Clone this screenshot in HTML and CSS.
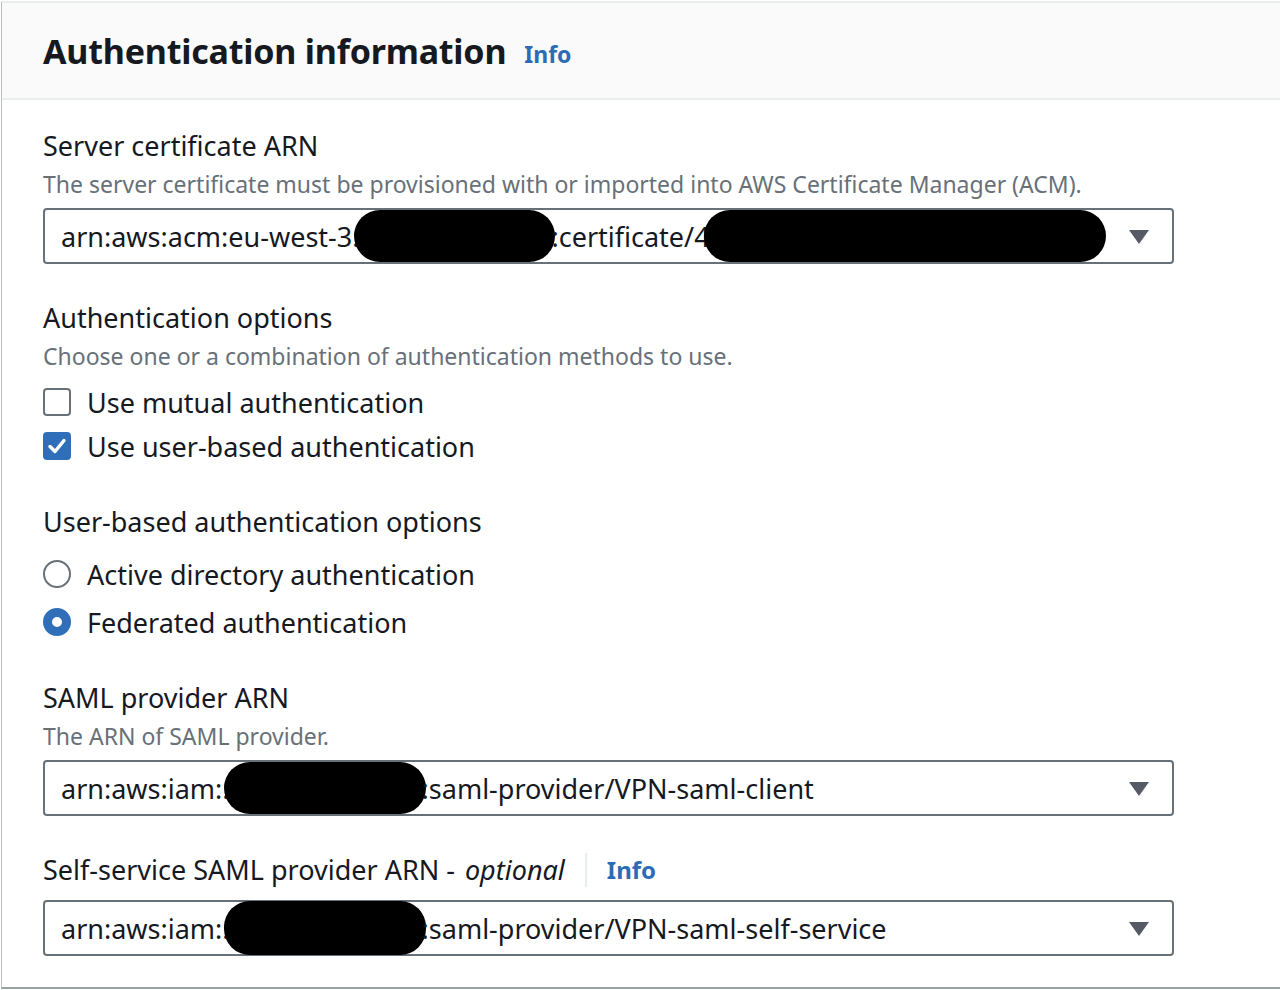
FILE: index.html
```html
<!DOCTYPE html>
<html lang="en">
<head>
<meta charset="utf-8">
<title>Authentication information</title>
<link rel="stylesheet" href="styles.css">
</head>
<body>
<div class="panel">
  <div class="panel-header">
    <h2 class="panel-title">Authentication information</h2>
    <a class="info-link header-info" href="#">Info</a>
  </div>
  <div class="panel-body">
    <div class="field">
      <div class="label">Server certificate ARN</div>
      <div class="desc">The server certificate must be provisioned with or imported into AWS Certificate Manager (ACM).</div>
      <div class="select">
        <span class="select-value">arn:aws:acm:eu-west-3:<span class="redact r1"></span>:certificate/4<span class="redact r2"></span></span>
        <svg class="caret" viewBox="0 0 20 14" width="20" height="14"><path d="M0 0 L20 0 L10 14 Z" fill="#545b64"/></svg>
      </div>
    </div>

    <div class="field gap-top">
      <div class="label">Authentication options</div>
      <div class="desc">Choose one or a combination of authentication methods to use.</div>
      <div class="choices checks">
        <label class="choice"><span class="checkbox"></span><span>Use mutual authentication</span></label>
        <label class="choice"><span class="checkbox checked"><svg viewBox="0 0 28 28" width="28" height="28"><path d="M7 14.5 L12 19.5 L21 8.5" fill="none" stroke="#fff" stroke-width="3.4" stroke-linecap="round" stroke-linejoin="round"/></svg></span><span>Use user-based authentication</span></label>
      </div>
    </div>

    <div class="field gap-top">
      <div class="label">User-based authentication options</div>
      <div class="choices radios">
        <label class="choice radio-row"><span class="radio"></span><span>Active directory authentication</span></label>
        <label class="choice radio-row"><span class="radio checked"></span><span>Federated authentication</span></label>
      </div>
    </div>

    <div class="field gap-top-s">
      <div class="label">SAML provider ARN</div>
      <div class="desc">The ARN of SAML provider.</div>
      <div class="select">
        <span class="select-value">arn:aws:iam::<span class="redact r3"></span>:saml-provider/VPN-saml-client</span>
        <svg class="caret" viewBox="0 0 20 14" width="20" height="14"><path d="M0 0 L20 0 L10 14 Z" fill="#545b64"/></svg>
      </div>
    </div>

    <div class="field gap-top">
      <div class="label label-row">Self-service SAML provider ARN -<i>optional</i><span class="divider"></span><a class="info-link" href="#">Info</a></div>
      <div class="select select-close">
        <span class="select-value">arn:aws:iam::<span class="redact r4"></span>:saml-provider/VPN-saml-self-service</span>
        <svg class="caret" viewBox="0 0 20 14" width="20" height="14"><path d="M0 0 L20 0 L10 14 Z" fill="#545b64"/></svg>
      </div>
    </div>
  </div>
</div>
</body>
</html>
```

FILE: styles.css
```css
html, body {
  margin: 0;
  padding: 0;
  background: #ffffff;
}

body {
  font-family: "Noto Sans", "Open Sans", sans-serif;
  color: #16191f;
}

.panel {
  margin-left: 1px;
  margin-top: 1px;
  border-left: 1px solid #b9bfbf;
  border-top: 2px solid #eaeded;
  border-bottom: 2px solid #9aa2a2;
}

.panel-header {
  background: #fafafa;
  border-bottom: 2px solid #eaeded;
  height: 97px;
  box-sizing: border-box;
  display: flex;
  align-items: center;
  padding-left: 41px;
}

.panel-title {
  margin: 0;
  font-family: "Noto Sans", sans-serif;
  font-weight: 700;
  font-size: 34px;
  letter-spacing: -0.2px;
  color: #16191f;
  line-height: 44px;
}

.info-link {
  color: #2b6cb5;
  font-weight: 700;
  text-decoration: none;
}

.header-info {
  font-size: 23px;
  margin-left: 18px;
  margin-top: 6px;
}

.panel-body {
  padding: 28px 106px 31px 41px;
}

.label {
  font-size: 27px;
  line-height: 36px;
  color: #16191f;
}

.desc {
  font-size: 23px;
  line-height: 40px;
  color: #687078;
}

.gap-top {
  margin-top: 36px;
}

.gap-top-s {
  margin-top: 34px;
}

.select {
  margin-top: 4px;
  height: 56px;
  box-sizing: border-box;
  border: 2px solid #687078;
  border-radius: 4px;
  display: flex;
  align-items: center;
  justify-content: space-between;
  padding: 0 23px 0 16px;
  font-size: 27px;
}

.select-close {
  margin-top: 12px;
}

.select-value {
  display: flex;
  align-items: center;
  white-space: nowrap;
}

.redact {
  display: inline-block;
  background: #000;
  height: 52px;
  border-radius: 26px;
  flex: none;
}

.r1 { width: 201px; margin-left: -5px; margin-right: -4px; }
.r2 { width: 402px; margin-left: -6px; }
.r3 { width: 202px; margin-left: -6px; margin-right: -4px; }
.r4 { width: 202px; margin-left: -6px; margin-right: -4px; height: 54px; }

.caret {
  display: block;
  margin-top: 2px;
}

.choices {
  display: flex;
  flex-direction: column;
}

.checks {
  margin-top: 4px;
}

.radios {
  margin-top: 10px;
}

.choice {
  display: flex;
  align-items: center;
  gap: 16px;
  height: 44px;
  font-size: 27px;
  color: #16191f;
}

.radio-row {
  height: 48px;
}

.checkbox {
  width: 28px;
  height: 28px;
  box-sizing: border-box;
  border: 2px solid #687078;
  border-radius: 4px;
  flex: none;
  position: relative;
}

.checkbox.checked {
  background: #2f6fba;
  border-color: #2f6fba;
}

.checkbox.checked svg {
  position: absolute;
  left: -2px;
  top: -2px;
}

.radio {
  width: 28px;
  height: 28px;
  box-sizing: border-box;
  border: 2px solid #687078;
  border-radius: 50%;
  flex: none;
}

.radio.checked {
  border: 9px solid #2f6fba;
  background: #fff;
}

.label-row {
  display: flex;
  align-items: center;
}

.label-row i {
  margin-left: 10px;
}

.divider {
  display: inline-block;
  width: 2px;
  height: 34px;
  background: #eaeded;
  margin: 0 20px;
}

.label-row .info-link {
  font-size: 24px;
}
```
